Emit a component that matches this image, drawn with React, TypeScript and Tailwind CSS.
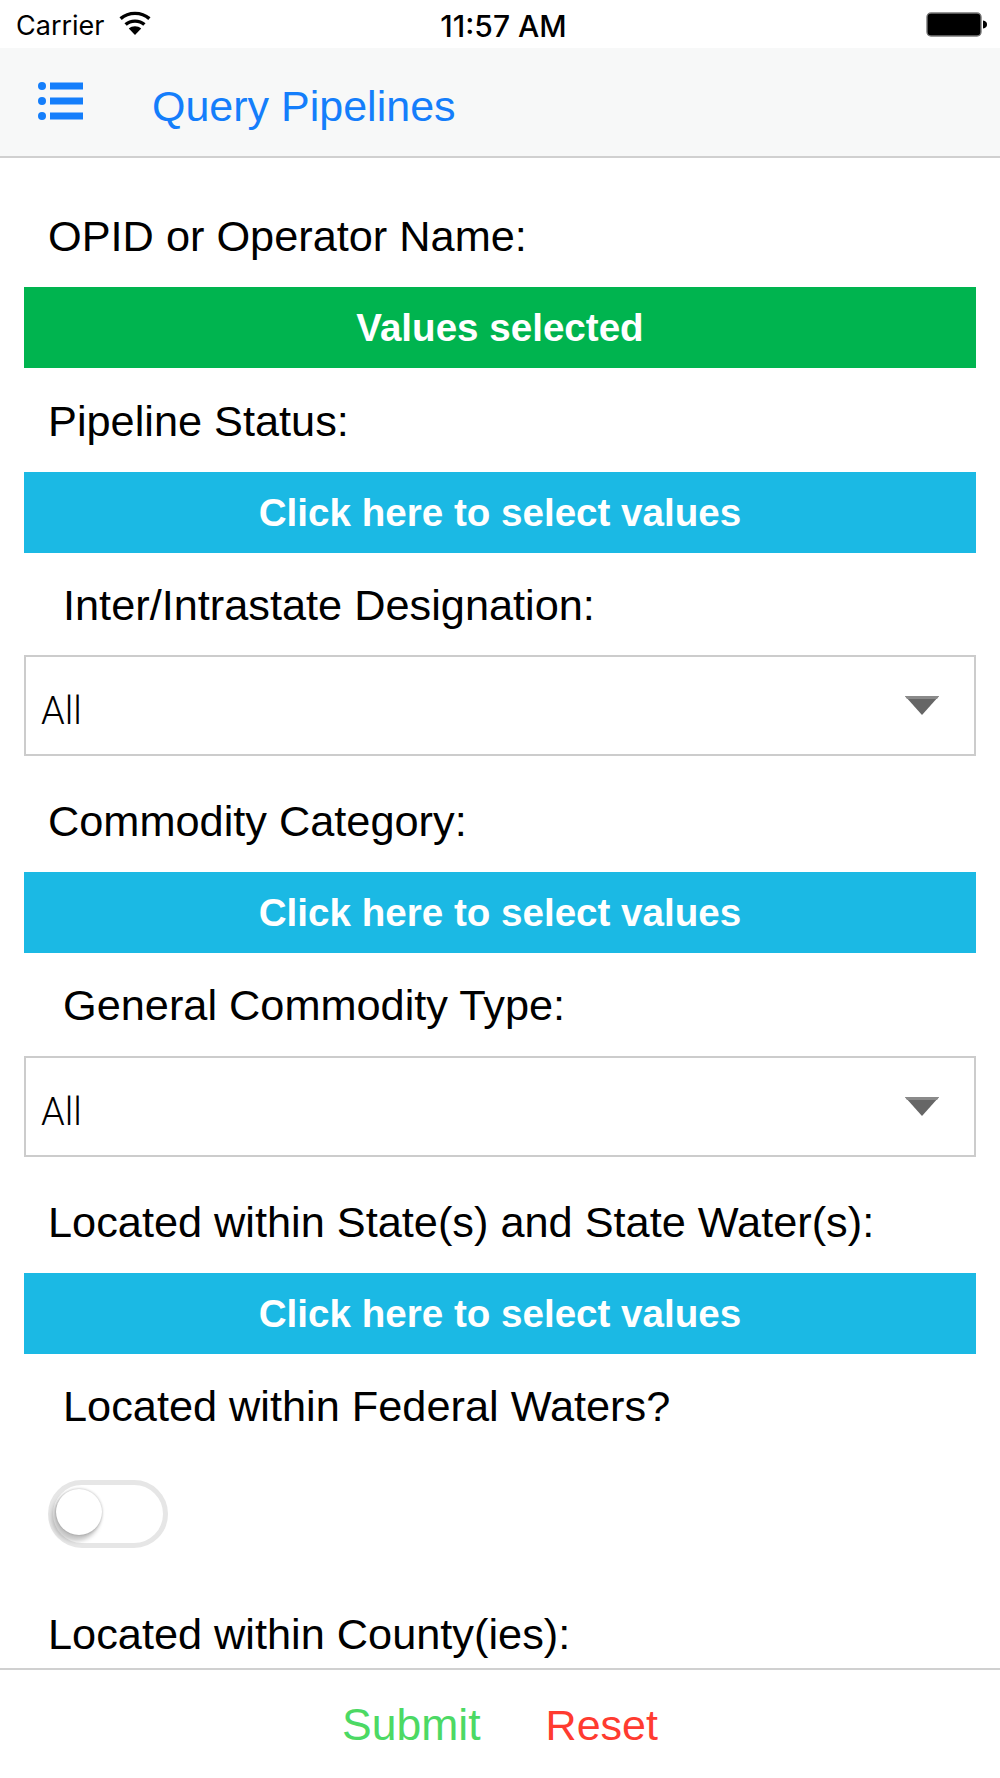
export default function App() {
  const label = "h-[48px] flex items-center text-[43.3px] leading-none text-black whitespace-nowrap pt-[2px]";
  const action = "h-[81px] mx-[24px] flex items-center justify-center text-[38.6px] font-bold text-white leading-none pt-[1px]";
  const select = "h-[101px] mx-[24px] pl-[15px] pr-[35px] border-2 border-[#cccccc] flex items-center justify-between";
  const allText = "text-[38px] leading-none font-light font-['Roboto',sans-serif] text-black pt-[10px]";
  const Caret = () => (
    <svg width="34" height="19" viewBox="0 0 34 19">
      <path d="M0 0H34L17 19Z" fill="#666666" />
      <path d="M0 0H34L32 3H2Z" fill="#8a8a8a" />
    </svg>
  );
  return (
    <div className="w-[1000px] h-[1778px] bg-white flex flex-col overflow-hidden font-['Liberation_Sans',Arial,sans-serif]">
      <div className="h-[48px] pl-[16px] pr-[12px] flex items-center font-['Inter',sans-serif] text-black">
        <div className="flex-1 flex items-center gap-[14px]">
          <span className="text-[27px] leading-none pt-[2px]">Carrier</span>
          <svg width="32" height="24" viewBox="0 0 32 24" className="-mt-[2px]">
            <path d="M16 24L9.8 17.6C13.2 14.6 18.8 14.6 22.2 17.6Z" fill="#000" />
            <path d="M6.6 13.6C11.6 8.9 20.4 8.9 25.4 13.6" fill="none" stroke="#000" strokeWidth="3.4" />
            <path d="M1.6 7.6C9.6 0.6 22.4 0.6 30.4 7.6" fill="none" stroke="#000" strokeWidth="3.4" />
          </svg>
        </div>
        <span className="text-[30px] font-medium leading-none pt-[4px] pl-[3px]">11:57 AM</span>
        <div className="flex-1 flex items-center justify-end">
          <svg width="62" height="26" viewBox="0 0 62 26" className="mt-[1px]">
            <rect x="1" y="1" width="54" height="23" rx="4" fill="#000" stroke="#777777" strokeWidth="1.4" />
            <path d="M57 8.5C60 9 61 10.5 61 12.5C61 14.5 60 16 57 16.5Z" fill="#000" />
          </svg>
        </div>
      </div>

      <div className="h-[110px] shrink-0 bg-[#f7f8f8] border-b-2 border-[#d0d0d0] flex items-center pl-[38px]">
        <svg width="46" height="38" viewBox="0 0 46 38" className="-mt-[3px]">
          <circle cx="4" cy="4" r="4" fill="#147efb" />
          <circle cx="4" cy="19" r="4" fill="#147efb" />
          <circle cx="4" cy="34" r="4" fill="#147efb" />
          <rect x="12" y="0.5" width="33" height="7" fill="#147efb" />
          <rect x="12" y="15.5" width="33" height="7" fill="#147efb" />
          <rect x="12" y="30.5" width="33" height="7" fill="#147efb" />
        </svg>
        <span className="ml-[68px] mt-[9px] text-[43px] leading-none text-[#147efb]">Query Pipelines</span>
      </div>

      <div className="flex-1 flex flex-col overflow-hidden">
        <div className={`${label} mt-[54px] mb-[27px] pl-[48px]`}>OPID or Operator Name:</div>
        <div className={`${action} bg-[#00b44f]`}>Values selected</div>

        <div className={`${label} mt-[29px] mb-[27px] pl-[48px]`}>Pipeline Status:</div>
        <div className={`${action} bg-[#1bb9e4]`}>Click here to select values</div>

        <div className={`${label} mt-[28px] mb-[26px] pl-[63px]`}>Inter/Intrastate Designation:</div>
        <div className={select}>
          <span className={allText}>All</span>
          <Caret />
        </div>

        <div className={`${label} mt-[41px] mb-[27px] pl-[48px]`}>Commodity Category:</div>
        <div className={`${action} bg-[#1bb9e4]`}>Click here to select values</div>

        <div className={`${label} mt-[28px] mb-[27px] pl-[63px]`}>General Commodity Type:</div>
        <div className={select}>
          <span className={allText}>All</span>
          <Caret />
        </div>

        <div className={`${label} mt-[41px] mb-[27px] pl-[48px]`}>Located within State(s) and State Water(s):</div>
        <div className={`${action} bg-[#1bb9e4]`}>Click here to select values</div>

        <div className={`${label} mt-[28px] mb-[50px] pl-[63px]`}>Located within Federal Waters?</div>
        <div className="ml-[48px] w-[120px] h-[68px] rounded-full border-[5px] border-[#e6e6e6] bg-white flex items-center pl-[3px] pb-[4px]">
          <div className="w-[46px] h-[46px] rounded-full bg-white shadow-[-3px_5px_4px_1px_rgba(0,0,0,0.22),0_0_3px_rgba(0,0,0,0.3)]" />
        </div>

        <div className={`${label} mt-[62px] pl-[48px]`}>Located within County(ies):</div>
      </div>

      <div className="h-[110px] shrink-0 border-t-2 border-[#d0d0d0] flex items-center justify-center gap-[65px] pt-[3px] leading-none">
        <span className="text-[44.5px] text-[#4cd964]">Submit</span>
        <span className="text-[43px] text-[#ff3b30]">Reset</span>
      </div>
    </div>
  );
}
